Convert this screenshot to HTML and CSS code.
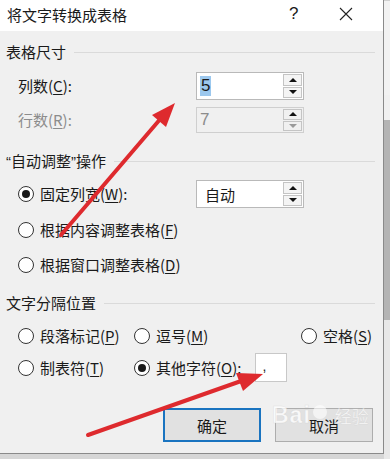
FILE: index.html
```html
<!DOCTYPE html>
<html lang="zh">
<head>
<meta charset="utf-8">
<link rel="stylesheet" href="styles.css">
</head>
<body>
<div class="screen">
  <div class="dialog">
    <div class="titlebar">
      <span class="title">将文字转换成表格</span>
      <span class="help">?</span>
      <span class="close">
        <svg width="14" height="14" viewBox="0 0 14 14"><path d="M1 1 L13 13 M13 1 L1 13" stroke="#222" stroke-width="1.1" fill="none"/></svg>
      </span>
    </div>
    <div class="body">
      <div class="group-head g1"><span>表格尺寸</span><i class="rule"></i></div>
      <div class="row r-cols">
        <span class="label">列数(<u>C</u>):</span>
        <div class="spin tall">
          <span class="val"><span class="sel">5</span></span>
          <span class="btns"><span class="b up"></span><span class="b down"></span></span>
        </div>
      </div>
      <div class="row r-rows">
        <span class="label dis">行数(<u>R</u>):</span>
        <div class="spin disabled">
          <span class="val">7</span>
          <span class="btns"><span class="b up"></span><span class="b down dim"></span></span>
        </div>
      </div>

      <div class="group-head g2"><span><span class="q">“</span>自动调整<span class="q">”</span>操作</span><i class="rule"></i></div>
      <div class="row r-fixed">
        <span class="radio on"></span><span class="rtext">固定列宽(<u>W</u>):</span>
        <div class="spin tall fixed-spin">
          <span class="val">自动</span>
          <span class="btns"><span class="b up"></span><span class="b down"></span></span>
        </div>
      </div>
      <div class="row r-opt1"><span class="radio"></span><span class="rtext">根据内容调整表格(<u>F</u>)</span></div>
      <div class="row r-opt2"><span class="radio"></span><span class="rtext">根据窗口调整表格(<u>D</u>)</span></div>

      <div class="group-head g3"><span>文字分隔位置</span><i class="rule"></i></div>
      <div class="sep-grid">
        <div class="cell c1"><span class="radio"></span><span class="rtext">段落标记(<u>P</u>)</span></div>
        <div class="cell c2"><span class="radio"></span><span class="rtext">逗号(<u>M</u>)</span></div>
        <div class="cell c3"><span class="radio"></span><span class="rtext">空格(<u>S</u>)</span></div>
        <div class="cell c1 row2"><span class="radio"></span><span class="rtext">制表符(<u>T</u>)</span></div>
        <div class="cell c2 row2 other"><span class="radio on"></span><span class="rtext">其他字符(<u>O</u>):</span><span class="charbox">,</span></div>
      </div>

      <div class="buttons">
        <button class="btn primary">确定</button>
        <button class="btn">取消</button>
      </div>
    </div>
  </div>
  <div class="side">
    <i class="s1"></i><i class="s2"></i><i class="s3"></i><i class="s4"></i>
  </div>
  <div class="watermark"><span class="wm-bai">Bai</span><span class="wm-paw"></span><span class="wm-jy">经验</span></div>
  <svg class="arrows" width="390" height="459" viewBox="0 0 390 459">
    <line x1="61" y1="235" x2="162" y2="117" stroke="#de2a2e" stroke-width="4" stroke-linecap="round"/>
    <polygon points="175,103 166,127 152,115" fill="#de2a2e"/>
    <line x1="88" y1="435" x2="244" y2="380" stroke="#de2a2e" stroke-width="4" stroke-linecap="round"/>
    <polygon points="263,374 243,391 236,373" fill="#de2a2e"/>
  </svg>
</div>
</body>
</html>
```

FILE: styles.css
```css
* { box-sizing: border-box; }
html, body { margin: 0; padding: 0; }
body {
  width: 390px;
  height: 459px;
  overflow: hidden;
  background: #d6d6d6;
  font-family: "Noto Sans CJK SC", "Liberation Sans", sans-serif;
  color: #1a1a1a;
  font-size: 15px;
}
.screen {
  position: relative;
  width: 390px;
  height: 459px;
  display: flex;
  align-items: flex-start;
}
.dialog {
  width: 384px;
  height: 454px;
  background: #f0f0f0;
  border-right: 1px solid #8a8a8a;
  border-bottom: 1px solid #8a8a8a;
  display: flex;
  flex-direction: column;
  flex: none;
}
.titlebar {
  height: 31px;
  background: #fff;
  display: flex;
  align-items: center;
  padding-left: 7px;
}
.title { font-size: 15px; line-height: 20px; width: 282px; margin-top: -2px; }
.help { font-family: "Liberation Sans", sans-serif; font-size: 17px; width: 50px; margin-top: -3px; }
.close { display: flex; margin-top: -3px; }
.body { padding: 0 8px 0 0; display: flex; flex-direction: column; }

.group-head {
  display: flex;
  align-items: center;
  height: 20px;
  line-height: 20px;
  padding-left: 6px;
  font-size: 15px;
}
.group-head .rule { flex: 1; height: 1px; background: #dadada; margin-left: 8px; }
.group-head .q { font-family: "Liberation Sans", sans-serif; }
.g1 { margin-top: 11px; }
.g2 { margin-top: 18px; padding-left: 6px; }
.g3 { margin-top: 17px; }

.row { display: flex; align-items: center; padding-left: 18px; }
.label { width: 178px; line-height: 20px; }
.label.dis { color: #8c8c8c; }
u { text-decoration: underline; text-underline-offset: 2px; text-decoration-thickness: 1px; }

.r-cols { margin-top: 10px; height: 28px; }
.r-rows { margin-top: 7px; height: 26px; }
.r-fixed { margin-top: 9px; height: 28px; }
.r-opt1 { margin-top: 11px; height: 22px; }
.r-opt2 { margin-top: 13px; height: 22px; }

.spin {
  width: 108px;
  height: 26px;
  border: 1px solid #b9b9b9;
  background: #fff;
  display: flex;
  align-items: stretch;
}
.spin.tall { height: 28px; }
.spin .val { flex: 1; display: flex; align-items: center; padding-left: 3px; font-size: 16px; }
.spin .sel { background: #9cc8ee; color: #1a1a1a; line-height: 20px; padding: 0 1px; font-family: "Liberation Sans", sans-serif; font-size: 17px; }
.spin.disabled { background: #f0f0f0; border-color: #cfcfcf; }
.spin.disabled .val { color: #8c8c8c; font-family: "Liberation Sans", sans-serif; font-size: 17px; }
.spin .btns { width: 20px; display: flex; flex-direction: column; padding: 1px 1px 1px 0; gap: 1px; }
.spin .b {
  flex: 1;
  border: 1px solid #c4c4c4;
  background: #f4f4f4;
  position: relative;
}
.spin .b::after {
  content: "";
  position: absolute;
  left: 50%;
  top: 50%;
  width: 0; height: 0;
  border-left: 4px solid transparent;
  border-right: 4px solid transparent;
  transform: translate(-50%, -50%);
}
.spin .b.up::after { border-bottom: 4px solid #111; }
.spin .b.down::after { border-top: 4px solid #111; }
.spin .b.down.dim::after { border-top-color: #9a9a9a; }
.spin.disabled .b { background: #f0f0f0; }
.fixed-spin .val { font-size: 15px; padding-left: 8px; }

.radio {
  width: 16px;
  height: 16px;
  border: 1px solid #333;
  border-radius: 50%;
  background: #fff;
  flex: none;
  display: flex;
  align-items: center;
  justify-content: center;
}
.radio.on::after {
  content: "";
  width: 8px; height: 8px;
  border-radius: 50%;
  background: #1a1a1a;
}
.rtext { margin-left: 6px; line-height: 20px; white-space: nowrap; }
.r-fixed .rtext { width: 156px; }

.sep-grid {
  display: grid;
  grid-template-columns: 116px 167px auto;
  grid-template-rows: 22px 29px;
  row-gap: 6px;
  margin-top: 12px;
  padding-left: 18px;
}
.cell { display: flex; align-items: center; }
.c1 { grid-column: 1; }
.c2 { grid-column: 2; }
.c3 { grid-column: 3; }
.row2 { grid-row: 2; }
.other .rtext { margin-right: 14px; }
.charbox {
  width: 32px;
  height: 29px;
  background: #fff;
  border: 1px solid #c8c8c8;
  display: flex;
  align-items: flex-start;
  padding: 7px 0 0 6px;
  font-family: "Liberation Sans", sans-serif;
  font-size: 14px;
  line-height: 10px;
}

.buttons { display: flex; justify-content: flex-end; gap: 14px; margin-top: 26px; padding-right: 2px; }
.btn {
  width: 98px;
  height: 34px;
  background: #e1e1e1;
  border: 1px solid #adadad;
  font-family: "Noto Sans CJK SC", sans-serif;
  font-size: 15px;
  color: #1a1a1a;
  padding: 0;
}
.btn.primary { border: 2px solid #1a74c0; }

.side {
  width: 6px;
  height: 459px;
  flex: none;
  display: flex;
  flex-direction: column;
  background: #e4e4e4;
}
.side i { display: block; }
.side .s1 { height: 95px; background: #f2f2f2; border-top: 1px solid #d0d0d0; }
.side .s2 { height: 25px; background: #f0f0f0; }
.side .s3 { height: 200px; background: #b4b4b4; }
.side .s4 { flex: 1; background: #e8e8e8; }

.watermark {
  position: absolute;
  left: 272px;
  top: 402px;
  display: flex;
  align-items: center;
  gap: 2px;
  pointer-events: none;
}
.wm-bai {
  font-family: "Liberation Sans", sans-serif;
  font-weight: bold;
  font-size: 23px;
  color: rgba(255,255,255,0.8);
  -webkit-text-stroke: 0.5px rgba(200,200,200,0.5);
  letter-spacing: 1px;
}
.wm-paw { width: 14px; height: 14px; border-radius: 50%; background: rgba(255,255,255,0.6); margin-top: -8px; }
.wm-jy {
  font-size: 17px;
  color: rgba(255,255,255,0.8);
  -webkit-text-stroke: 0.4px rgba(200,200,200,0.5);
  margin-left: 6px;
}

.arrows { position: absolute; left: 0; top: 0; pointer-events: none; }
```
